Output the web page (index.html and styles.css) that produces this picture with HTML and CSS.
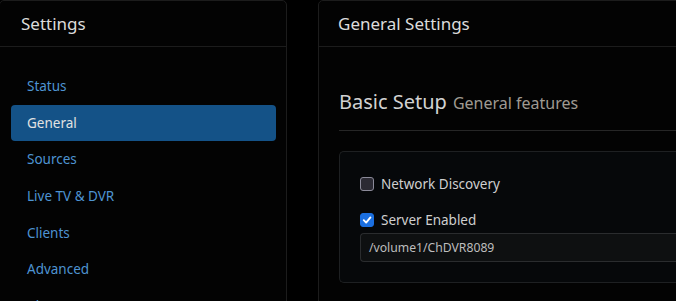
FILE: index.html
```html
<!DOCTYPE html>
<html>
<head>
<meta charset="utf-8">
<link rel="stylesheet" href="styles.css">
</head>
<body>
<div class="layout">
  <aside class="card side">
    <div class="card-header">Settings</div>
    <nav class="nav">
      <a class="nav-link">Status</a>
      <a class="nav-link active">General</a>
      <a class="nav-link">Sources</a>
      <a class="nav-link">Live TV &amp; DVR</a>
      <a class="nav-link">Clients</a>
      <a class="nav-link">Advanced</a>
      <a class="nav-link">Alerts</a>
    </nav>
  </aside>
  <main class="card main">
    <div class="card-header">General Settings</div>
    <div class="card-body">
      <h2 class="section-title">Basic Setup <small>General features</small></h2>
      <div class="panel">
        <label class="check"><span class="box"></span>Network Discovery</label>
        <label class="check"><span class="box checked"><svg viewBox="0 0 14 14" width="14" height="14"><path d="M3.2 7.2 L6 10 L11 4" fill="none" stroke="#fff" stroke-width="2.2" stroke-linecap="round" stroke-linejoin="round"/></svg></span>Server Enabled</label>
        <div class="input">/volume1/ChDVR8089</div>
      </div>
    </div>
  </main>
</div>
</body>
</html>
```
FILE: styles.css
```css
html, body {
  margin: 0;
  padding: 0;
  background: #000;
  height: 100%;
  overflow: hidden;
}
body {
  font-family: "Noto Sans", "Open Sans", sans-serif;
  color: #d6d6d6;
}
.layout {
  display: flex;
  gap: 31px;
  margin-left: -1px;
  align-items: flex-start;
}
.card {
  background: #030303;
  border: 1px solid #1c1c1c;
  border-radius: 5px;
  height: 340px;
  box-sizing: border-box;
}
.side {
  width: 288px;
  flex: none;
}
.main {
  flex: 1;
  min-width: 420px;
}
.card-header {
  height: 46px;
  box-sizing: border-box;
  border-bottom: 1px solid #1c1c1c;
  display: flex;
  align-items: center;
  padding-left: 19px;
  font-size: 17px;
  color: #dcdcdc;
}
.side .card-header {
  padding-left: 21px;
}
.nav {
  display: flex;
  flex-direction: column;
  padding: 21px 10px 0 11px;
}
.nav-link {
  height: 36.6px;
  box-sizing: border-box;
  display: flex;
  align-items: center;
  padding-left: 16px;
  font-size: 13.5px;
  color: #4e94d2;
  border-radius: 4px;
}
.nav-link.active {
  background: #145287;
  color: #e2e2e2;
}
.card-body {
  padding: 0 0 0 20px;
}
.section-title {
  margin: 0;
  padding-top: 41px;
  height: 84px;
  box-sizing: border-box;
  border-bottom: 1px solid #262626;
  font-weight: normal;
  font-size: 20px;
  color: #d2d2d2;
  display: flex;
  align-items: baseline;
  gap: 6px;
}
.section-title small {
  font-size: 16px;
  color: #9f9a92;
}
.panel {
  margin-top: 20px;
  background: #06080a;
  border: 1px solid #1e2022;
  border-right: none;
  border-radius: 5px 0 0 5px;
  height: 132px;
  box-sizing: border-box;
  padding: 18px 0 0 20px;
}
.check {
  display: flex;
  align-items: center;
  height: 28px;
  font-size: 13.5px;
  color: #cfcfcf;
  gap: 7px;
}
.check + .check {
  margin-top: 8px;
}
.box {
  width: 14px;
  height: 14px;
  box-sizing: border-box;
  border: 1px solid #8b8a99;
  background: #2b2a33;
  border-radius: 3px;
  display: flex;
  align-items: center;
  justify-content: center;
}
.box.checked {
  background: #1b6fe0;
  border-color: #1b6fe0;
}
.input {
  margin-top: -1px;
  height: 29px;
  box-sizing: border-box;
  background: #0e1011;
  border: 1px solid #2a2c2e;
  border-right: none;
  border-radius: 4px 0 0 4px;
  display: flex;
  align-items: center;
  padding-left: 8px;
  font-size: 12.2px;
  color: #bdbdbd;
}
```
